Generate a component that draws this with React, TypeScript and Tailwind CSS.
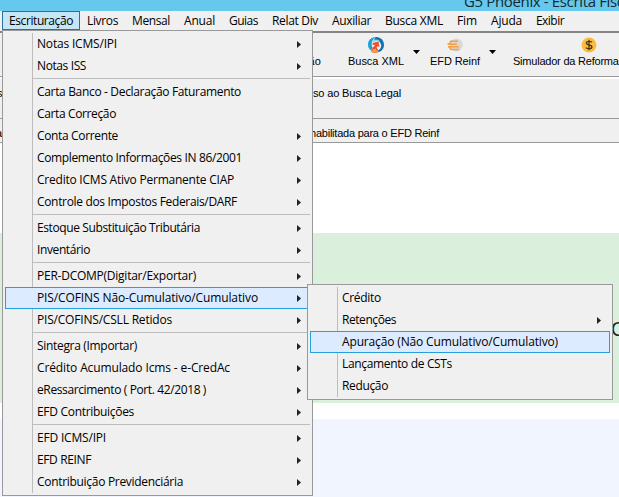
import { useLayoutEffect, useRef, useState } from "react";

type FitProps = { text: string; width: number; className?: string };

// Label whose tracking is adjusted so that it spans a given width.
function Fit({ text, width, className = "" }: FitProps) {
  const ref = useRef<HTMLSpanElement>(null);
  const [spacing, setSpacing] = useState(0);
  useLayoutEffect(() => {
    if (ref.current) {
      const natural = ref.current.getBoundingClientRect().width;
      setSpacing((width - natural) / text.length);
    }
  }, [text, width]);
  return (
    <span ref={ref} className={`inline-block shrink-0 whitespace-pre ${className}`} style={{ letterSpacing: `${spacing}px` }}>
      {text}
    </span>
  );
}

type Item = { label: string; width: number; arrow?: boolean; active?: boolean };

const groups: Item[][] = [
  [
    { label: "Notas ICMS/IPI", width: 80, arrow: true },
    { label: "Notas ISS", width: 49, arrow: true },
  ],
  [
    { label: "Carta Banco - Declaração Faturamento", width: 204 },
    { label: "Carta Correção", width: 79 },
    { label: "Conta Corrente", width: 81, arrow: true },
    { label: "Complemento Informações IN 86/2001", width: 205, arrow: true },
    { label: "Credito ICMS Ativo Permanente CIAP", width: 197, arrow: true },
    { label: "Controle dos Impostos Federais/DARF", width: 200, arrow: true },
  ],
  [
    { label: "Estoque Substituição Tributária", width: 163, arrow: true },
    { label: "Inventário", width: 53, arrow: true },
  ],
  [
    { label: "PER-DCOMP(Digitar/Exportar)", width: 159, arrow: true },
    { label: "PIS/COFINS Não-Cumulativo/Cumulativo", width: 221, arrow: true, active: true },
    { label: "PIS/COFINS/CSLL Retidos", width: 135, arrow: true },
  ],
  [
    { label: "Sintegra (Importar)", width: 100, arrow: true },
    { label: "Crédito Acumulado Icms - e-CredAc", width: 193, arrow: true },
    { label: "eRessarcimento ( Port. 42/2018 )", width: 169, arrow: true },
    { label: "EFD Contribuições", width: 97, arrow: true },
  ],
  [
    { label: "EFD ICMS/IPI", width: 69, arrow: true },
    { label: "EFD REINF", width: 54, arrow: true },
    { label: "Contribuição Previdenciária", width: 146, arrow: true },
  ],
];

const subItems: Item[] = [
  { label: "Crédito", width: 39 },
  { label: "Retenções", width: 54, arrow: true },
  { label: "Apuração (Não Cumulativo/Cumulativo)", width: 216, active: true },
  { label: "Lançamento de CSTs", width: 110 },
  { label: "Redução", width: 46 },
];

function Row({ item }: { item: Item }) {
  return (
    <div
      className={`relative flex h-[22px] items-center justify-between border pr-[8px] pl-[31px] ${
        item.active ? "border-[#26a0da] bg-[#dcebff]" : "border-transparent"
      }`}
    >
      <Fit text={item.label} width={item.width} />
      {item.arrow && (
        <svg width="4" height="7" viewBox="0 0 4 7" className="shrink-0">
          <path d="M0 0L4 3.5L0 7Z" fill="#222" />
        </svg>
      )}
    </div>
  );
}

const menus = [
  { label: "Livros", gap: 7, width: 31 },
  { label: "Mensal", gap: 14, width: 38 },
  { label: "Anual", gap: 14, width: 31 },
  { label: "Guias", gap: 14, width: 29 },
  { label: "Relat Div", gap: 14, width: 46 },
  { label: "Auxiliar", gap: 14, width: 39 },
  { label: "Busca XML", gap: 14, width: 58 },
  { label: "Fim", gap: 14, width: 20 },
  { label: "Ajuda", gap: 14, width: 31 },
  { label: "Exibir", gap: 14, width: 28 },
];

function Caret() {
  return (
    <svg width="7" height="4" viewBox="0 0 7 4" className="mt-[17px] shrink-0">
      <path d="M0 0H7L3.5 4Z" fill="#000" />
    </svg>
  );
}

function BuscaIcon() {
  return (
    <svg width="16" height="16" viewBox="0 0 16 16">
      <path d="M7.5 0C3 .3 0 3.5 0 7.6c0 2.8 1.2 4.8 3.2 6.2.2-1.4.7-2.2 1.5-3C2.8 7.5 3.6 3.5 7.5 0Z" fill="#1ba3d6" />
      <path d="M7.5 0C12.5-.2 16 3.300 16 7.800c0 3.800-2.300 6.500-5.500 7.500l-.6-1.900c3.200-1.400 4.100-4.600 2.600-7.200C11.200 3.900 8.600 3 5.800 3.400Z" fill="#1470b6" />
      <path d="M5 3.800C7.500 1.600 10.800 2.200 12.200 4.600 10 3.500 7.500 3.800 5.300 5.200Z" fill="#7ed4ea" />
      <path d="M4.5 6L10.5 4.500l1 5.500-2-.8c-1 .9-1.100 2 .4 3.200L9.500 15.500c-2.600.8-4.600.3-6.300-1.100.2-3 1.800-4.600 4-6L4.500 7.500Z" fill="#e8562f" />
      <path d="M3.400 14.400C4.500 12.500 6 11.800 8 11.800c0 1.500.8 2.600 2.200 3.500-2.500 1-5 .5-6.800-.9Z" fill="#f6a042" />
    </svg>
  );
}

function ReinfIcon() {
  return (
    <svg width="16" height="14" viewBox="0 0 16 14">
      <circle cx="9.3" cy="7" r="6.5" fill="#d9d9d9" />
      <path d="M3.5 3.2H11M.5 6.2H10M1 8.8h11M3.5 11.5H12" stroke="#eda04e" strokeWidth="1.4" />
      <path d="M4.5 2.7L2 6.2M2.200 8.800l2 3" stroke="#eda04e" strokeWidth="1.5" />
    </svg>
  );
}

function CoinIcon() {
  return (
    <svg width="16" height="16" viewBox="0 0 16 16">
      <circle cx="8" cy="8" r="7.5" fill="#fdbc3c" />
      <path d="M11 5.2C10 4 5.3 3.7 5.3 6c0 2.6 5.6 1.3 5.6 4 0 2.2-4.8 2.2-6 .5M8 2.7v10.6" fill="none" stroke="#49391b" strokeWidth="1.3" />
    </svg>
  );
}

export default function App() {
  return (
    <div className="relative h-[497px] w-[619px] overflow-hidden bg-white font-['Open_Sans','Noto_Sans',sans-serif] text-[12px] leading-[16px] text-black">
      <header className="flex h-[11px] items-end overflow-hidden bg-[#66c8ec] pl-[464px]">
        <Fit text="G5 Phoenix - Escrita Fiscal" width={171} className="text-[15px] leading-[20px] text-[#142a33]" />
      </header>
      <nav className="flex h-[20px] bg-[#f0f0f0] pl-[2px]">
        <div className="flex h-[19px] w-[78px] shrink-0 items-center border border-[#2a70a0] bg-[#c5e6f7] pl-[6px]">
          <Fit text="Escrituração" width={64} />
        </div>
        {menus.map((m) => (
          <div key={m.label} className="flex h-[19px] shrink-0 items-center" style={{ marginLeft: m.gap, width: m.width }}>
            <Fit text={m.label} width={m.width} />
          </div>
        ))}
      </nav>

      <section className="flex h-[46px] border-t-2 border-b border-t-[#858585] border-b-[#999] bg-[#f0f0f0] pl-[303px] font-['Liberation_Sans',Arial,sans-serif] text-[11px] leading-[14px]">
        <Fit text="ção" width={18} className="mt-[21px]" />
        <div className="mt-[3px] ml-[13px] h-[32px] w-px bg-[#999]" />
        <div className="mt-[4px] ml-[14px] flex w-[56px] flex-col items-center">
          <BuscaIcon />
          <Fit text="Busca XML" width={56} className="mt-px" />
        </div>
        <div className="ml-[9px] w-[7px]"><Caret /></div>
        <div className="mt-[5px] ml-[9px] flex w-[51px] flex-col items-center">
          <ReinfIcon />
          <Fit text="EFD Reinf" width={50} className="mt-[2px] ml-px" />
        </div>
        <div className="ml-[9px] w-[7px]"><Caret /></div>
        <div className="mt-[3px] ml-[7px] h-[32px] w-px bg-[#999]" />
        <div className="mt-[4px] ml-[10px] flex w-[152px] shrink-0 flex-col items-center">
          <CoinIcon />
          <Fit text="Simulador da Reforma Trib" width={126} className="mt-px self-start" />
        </div>
      </section>

      <section className="flex h-[42px] border-t-2 border-b border-t-white border-b-[#999] bg-[#f0f0f0] font-['Liberation_Sans',Arial,sans-serif] text-[11px] leading-[14px]">
        <Fit text="s" width={6} className="mt-[7px] ml-[-3px]" />
        <Fit text="so ao Busca Legal" width={88} className="mt-[7px] ml-[310px]" />
      </section>
      <section className="flex h-[24px] border-b border-[#999] bg-[#f0f0f0] font-['Liberation_Sans',Arial,sans-serif] text-[11px] leading-[14px]">
        <Fit text="a" width={6} className="mt-[7px] ml-[-4px]" />
        <Fit text="habilitada para o EFD Reinf" width={129} className="mt-[7px] ml-[308px]" />
      </section>
      <main>
        <div className="h-[90px]" />
        <div className="flex h-[170px] bg-[#dbf0dc] pt-[84px] pl-[611px] font-['Liberation_Sans',Arial,sans-serif] text-[20px] leading-[24px] text-[#222]">
          <span>O</span>
        </div>
        <div className="h-[16px]" />
        <div className="h-[78px] bg-[#f0f5ff]" />
      </main>

      <div className="absolute top-[30px] left-[2px] h-[466px] w-[311px] border border-[#999] bg-[#f0f0f0] p-[2px]">
        <div className="absolute top-[2px] bottom-[2px] left-[29px] w-px bg-[#bdbdbd]" />
        {groups.map((g, i) => (
          <div key={i}>
            {i > 0 && (
              <div className="h-[4px] pt-px pl-[27px]">
                <div className="h-px bg-[#bdbdbd]" />
              </div>
            )}
            {g.map((item) => (
              <Row key={item.label} item={item} />
            ))}
          </div>
        ))}
      </div>

      <div className="absolute top-[284px] left-[307px] h-[116px] w-[306px] border border-[#999] bg-[#f0f0f0] p-[2px]">
        <div className="absolute top-[2px] bottom-[2px] left-[29px] w-px bg-[#bdbdbd]" />
        {subItems.map((item) => (
          <Row key={item.label} item={item} />
        ))}
      </div>
    </div>
  );
}
